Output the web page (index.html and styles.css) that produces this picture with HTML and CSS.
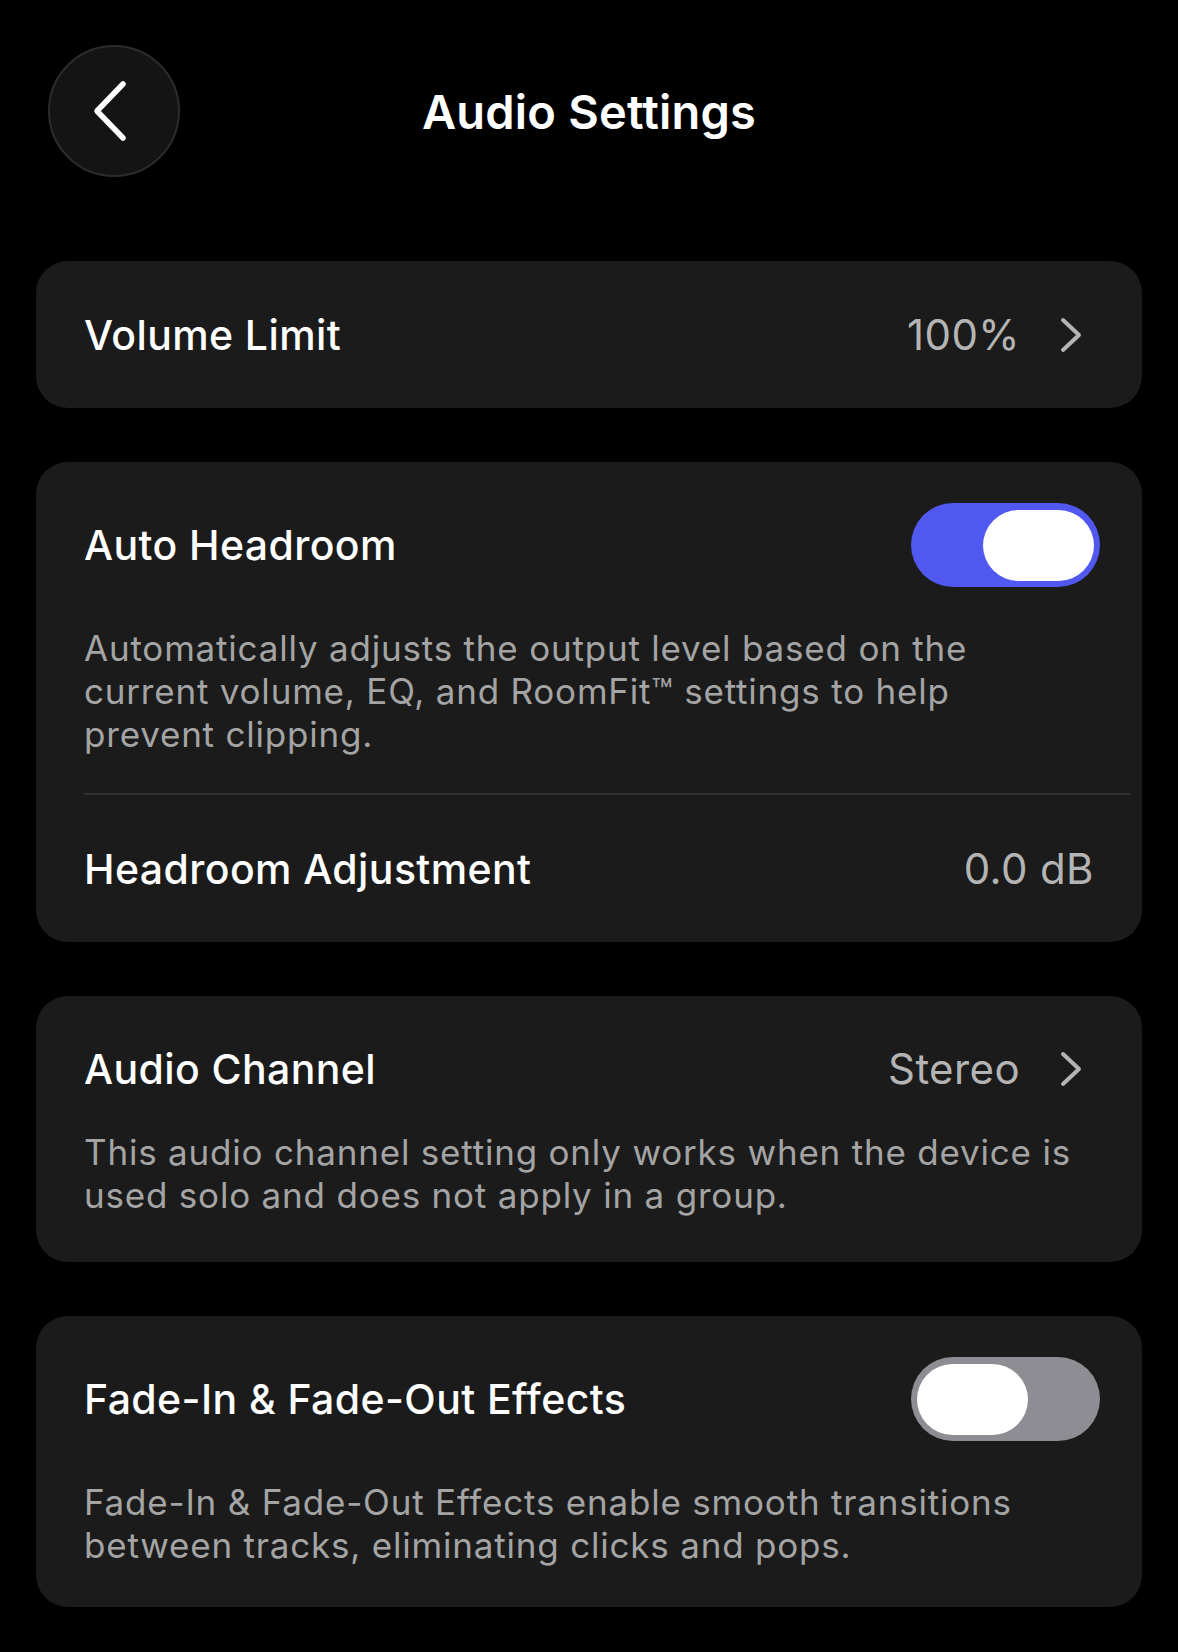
FILE: index.html
```html
<!DOCTYPE html>
<html lang="en">
<head>
    <meta charset="UTF-8">
    <meta name="viewport" content="width=device-width, initial-scale=1.0">
    <title>Audio Settings</title>
    <link rel="stylesheet" href="styles.css">
</head>
<body>

    <header class="topbar">
        <button class="back-btn" aria-label="Back">
            <svg width="40" height="62" viewBox="0 0 40 62">
                <path d="M33 4 L7 31 L33 58" fill="none" stroke="#fff" stroke-width="5.5" stroke-linecap="round" stroke-linejoin="round"/>
            </svg>
        </button>
        <h1 class="title">Audio Settings</h1>
        <span></span>
    </header>

    <main class="settings">
        <!-- Volume limit -->
        <section class="card">
            <div class="row row-single">
                <span class="label">Volume Limit</span>
                <span class="value">100%
                    <svg class="chev" width="26" height="36" viewBox="0 0 26 36">
                        <path d="M5 3 L21 18 L5 33" fill="none" stroke="#b4b4b4" stroke-width="4" stroke-linecap="round" stroke-linejoin="round"/>
                    </svg>
                </span>
            </div>
        </section>

        <!-- Auto headroom -->
        <section class="card">
            <div class="head head-toggle">
                <span class="label">Auto Headroom</span>
                <span class="toggle on"><span class="knob"></span></span>
            </div>
            <p class="desc">Automatically adjusts the output level based on the current volume, EQ, and RoomFit™ settings to help prevent clipping.</p>
            <div class="divider"></div>
            <div class="row row-single">
                <span class="label">Headroom Adjustment</span>
                <span class="value value-plain">0.0 dB</span>
            </div>
        </section>

        <!-- Audio channel -->
        <section class="card card-desc card-channel">
            <div class="head">
                <span class="label">Audio Channel</span>
                <span class="value">Stereo
                    <svg class="chev" width="26" height="36" viewBox="0 0 26 36">
                        <path d="M5 3 L21 18 L5 33" fill="none" stroke="#b4b4b4" stroke-width="4" stroke-linecap="round" stroke-linejoin="round"/>
                    </svg>
                </span>
            </div>
            <p class="desc">This audio channel setting only works when the device is used solo and does not apply in a group.</p>
        </section>

        <!-- Fade effects -->
        <section class="card card-desc">
            <div class="head head-toggle">
                <span class="label">Fade-In &amp; Fade-Out Effects</span>
                <span class="toggle"><span class="knob"></span></span>
            </div>
            <p class="desc">Fade-In &amp; Fade-Out Effects enable smooth transitions between tracks, eliminating clicks and pops.</p>
        </section>
    </main>

</body>
</html>
```

FILE: styles.css
```css
body {
    margin: 0;
    background: #000;
    color: #fff;
    font-family: 'Inter', 'Noto Sans', sans-serif;
}

/* Header with back button and centered title */
.topbar {
    display: grid;
    grid-template-columns: 1fr auto 1fr;
    align-items: center;
    padding: 45px 0 0;
    height: 132px;
}

.back-btn {
    width: 132px;
    height: 132px;
    margin-left: 48px;
    border-radius: 50%;
    background: #141414;
    border: 2px solid #2c2c2c;
    display: flex;
    justify-content: center;
    align-items: center;
    padding: 0 8px 0 0;
    box-sizing: border-box;
}

.title {
    margin: 0;
    font-size: 47px;
    font-weight: 600;
    letter-spacing: 0.2px;
}

.settings {
    display: flex;
    flex-direction: column;
    gap: 54px;
    padding: 84px 36px 40px;
}

.card {
    background: #1b1b1b;
    border-radius: 32px;
    padding: 0 42px 0 48px;
}

.card-desc {
    padding-bottom: 40px;
}

.card-channel {
    padding-bottom: 45px;
}

.label {
    font-size: 41px;
    font-weight: 500;
    line-height: 48px;
    letter-spacing: 0.4px;
}

.value {
    display: flex;
    align-items: center;
    gap: 38px;
    font-size: 42px;
    line-height: 48px;
    color: #b4b4b4;
    letter-spacing: 0.4px;
}

.value-plain {
    margin-right: 6px;
}

.chev {
    margin-right: 16px;
}

.row {
    display: flex;
    justify-content: space-between;
    align-items: center;
}

.row-single {
    min-height: 147px;
}

.head {
    display: flex;
    justify-content: space-between;
    align-items: center;
    padding-top: 49px;
    min-height: 48px;
}

.head-toggle {
    padding-top: 41px;
    min-height: 84px;
}

.desc {
    margin: 40px 0 0;
    font-size: 35px;
    line-height: 43px;
    color: #a4a4a4;
    letter-spacing: 0.8px;
    padding-right: 16px;
}

.card-channel .desc {
    margin-top: 38px;
}

.divider {
    height: 2px;
    background: #2f2f2f;
    margin: 37px -31px 0 0;
}

/* Switches */
.toggle {
    width: 189px;
    height: 84px;
    border-radius: 42px;
    background: #8e8d93;
    display: flex;
    align-items: center;
    padding: 0 6px;
    box-sizing: border-box;
}

.toggle.on {
    background: #5058f0;
    justify-content: flex-end;
}

.knob {
    width: 111px;
    height: 71px;
    border-radius: 36px;
    background: #fff;
}
```
